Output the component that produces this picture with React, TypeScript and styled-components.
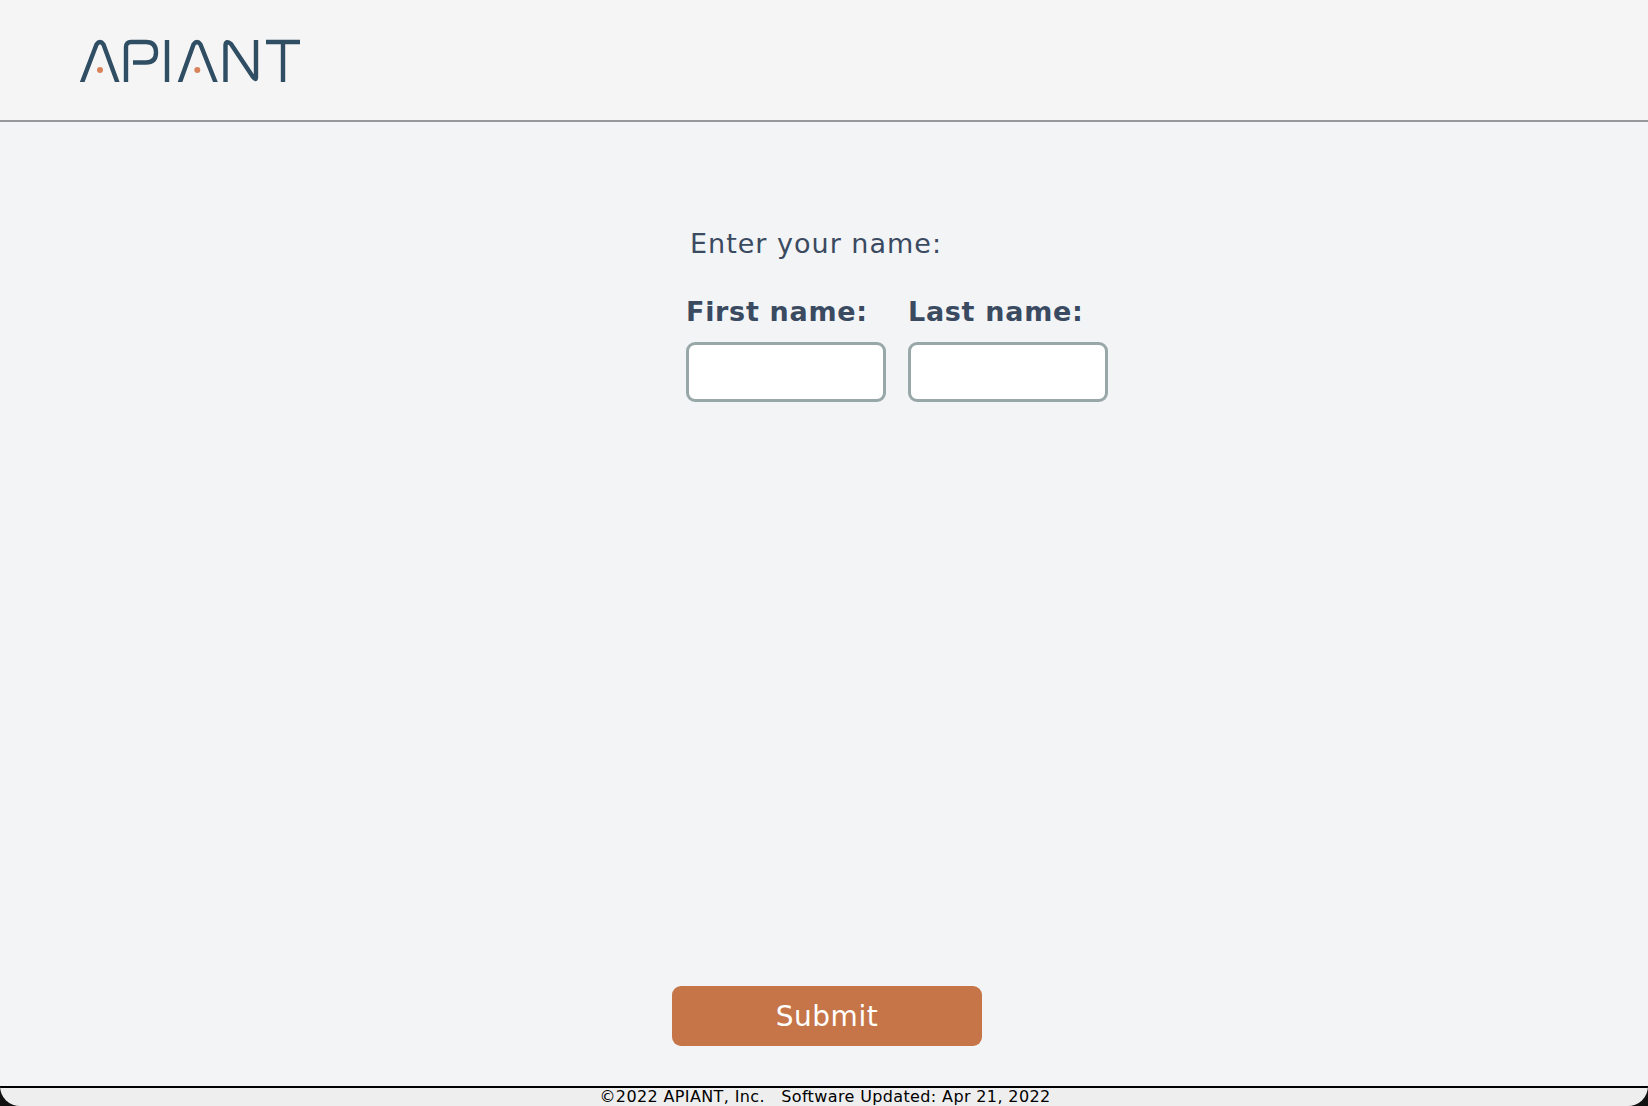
import React from "react";
import styled, { createGlobalStyle } from "styled-components";

const GlobalStyle = createGlobalStyle`
  html, body {
    margin: 0;
    padding: 0;
    background: #f3f4f6;
  }
  body {
    font-family: "DejaVu Sans", Verdana, sans-serif;
  }
`;

const Page = styled.div`
  width: 1648px;
  height: 1106px;
  display: flex;
  flex-direction: column;
  overflow: hidden;
`;

const Header = styled.header`
  height: 122px;
  flex: none;
  box-sizing: border-box;
  background: #f5f5f5;
  border-bottom: 2px solid #96999b;
  padding: 36px 0 0 76px;
`;

const Main = styled.main`
  flex: 1;
  display: flex;
  flex-direction: column;
  align-items: center;
  padding-bottom: 40px;
`;

const Form = styled.form`
  align-self: flex-start;
  margin-left: 686px;
  padding-top: 106px;
`;

const Prompt = styled.div`
  margin-left: 4px;
  font-size: 27px;
  line-height: 32px;
  letter-spacing: 1px;
  color: #3a4a60;
`;

const Fields = styled.div`
  display: flex;
  gap: 22px;
  margin-top: 36px;
`;

const Field = styled.label`
  display: flex;
  flex-direction: column;
  gap: 14px;
  width: 200px;
`;

const FieldName = styled.span`
  font-size: 27px;
  line-height: 32px;
  font-weight: 700;
  letter-spacing: 0.7px;
  color: #3a4a60;
  white-space: nowrap;
`;

const TextInput = styled.input`
  width: 200px;
  height: 60px;
  box-sizing: border-box;
  background: #fff;
  border: 3px solid #98a8a8;
  border-radius: 9px;
  outline: none;
`;

const SubmitButton = styled.button`
  margin-top: auto;
  margin-left: 6px;
  width: 310px;
  height: 60px;
  background: #c67548;
  border: none;
  border-radius: 9px;
  color: #fff;
  font-family: inherit;
  font-size: 28px;
  letter-spacing: 0.5px;
`;

const FooterBack = styled.div`
  flex: none;
  background: #111;
`;

const Footer = styled.footer`
  height: 20px;
  box-sizing: border-box;
  border-top: 2px solid #000;
  border-radius: 0 0 22px 22px;
  background: #eeeeee;
  color: #000;
  font-size: 16px;
  line-height: 18px;
  letter-spacing: 0.37px;
  padding-left: 2px;
  text-align: center;
  white-space: pre;
`;

const Logo = () => (
  <svg width="232" height="50" viewBox="0 0 232 50" fill="none">
    <defs>
      <clipPath id="baseline">
        <rect x="0" y="0" width="232" height="46" />
      </clipPath>
    </defs>
    <g clipPath="url(#baseline)" stroke="#2f4d63" strokeWidth="4.4" strokeLinejoin="round">
      <path d="M4.7 50 L20.5 8.5 Q24 3.5 27.5 8.5 L42.7 50" />
      <path d="M50 50 V11 Q50 6 55 6 H70 Q80 6 80 16.5 Q80 26.5 70 26.5 H57" />
      <path d="M91 4 V50" />
      <path d="M102.6 50 L117.5 8.5 Q121 3.5 124.5 8.5 L141 50" />
      <path d="M149.5 50 V9 Q150 4 155 8 L177 41 Q180 45 180 41 V4" />
      <path d="M190 6 H224 M207 6 V50" />
    </g>
    <circle cx="24" cy="34" r="3" fill="#d9835a" />
    <circle cx="121.3" cy="34" r="3" fill="#d9835a" />
  </svg>
);

export default function App() {
  return (
    <>
      <GlobalStyle />
      <Page>
        <Header>
          <Logo />
        </Header>
        <Main>
          <Form>
            <Prompt>Enter your name:</Prompt>
            <Fields>
              <Field>
                <FieldName>First name:</FieldName>
                <TextInput type="text" />
              </Field>
              <Field>
                <FieldName>Last name:</FieldName>
                <TextInput type="text" />
              </Field>
            </Fields>
          </Form>
          <SubmitButton type="button">Submit</SubmitButton>
        </Main>
        <FooterBack>
          <Footer>©2022 APIANT, Inc.   Software Updated: Apr 21, 2022</Footer>
        </FooterBack>
      </Page>
    </>
  );
}
